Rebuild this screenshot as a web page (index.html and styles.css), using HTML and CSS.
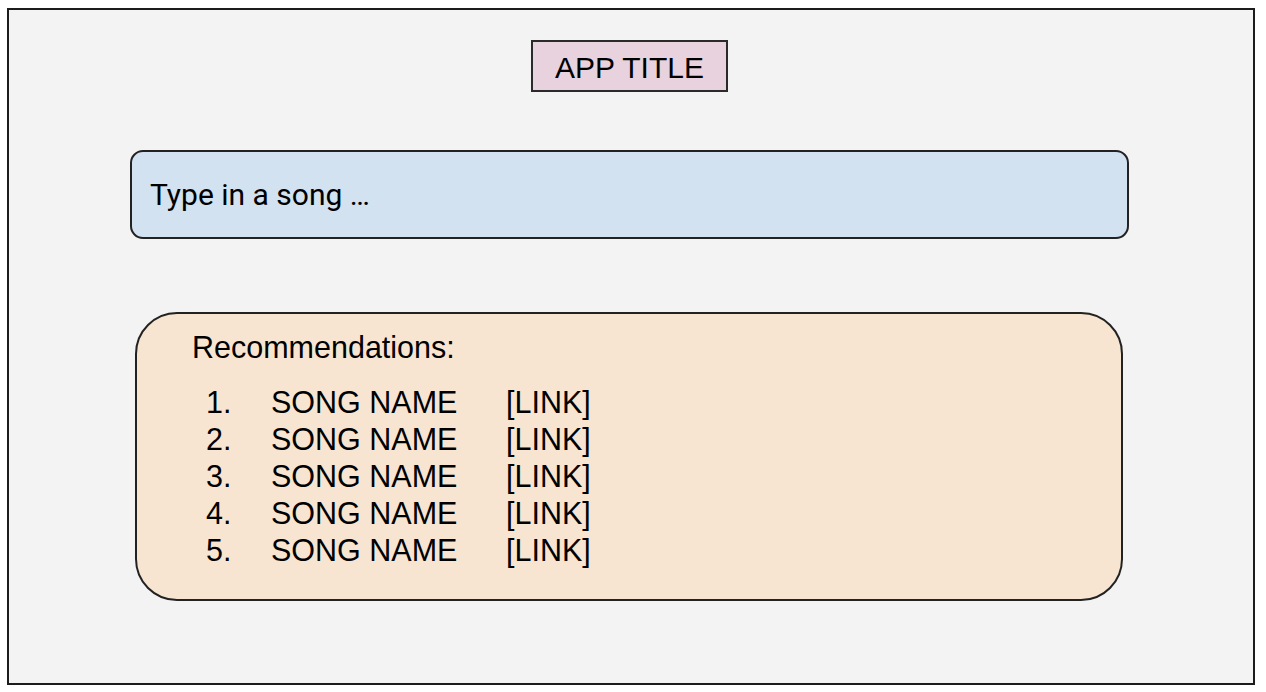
FILE: index.html
```html
<!DOCTYPE html>
<html lang="en">
<head>
<meta charset="utf-8">
<title>App</title>
<link rel="stylesheet" href="styles.css">
</head>
<body>
<div class="frame">
  <div class="title">APP TITLE</div>
  <div class="search">Type in a song …</div>
  <div class="recs">
    <div class="recs-head">Recommendations:</div>
    <ol class="rec-list">
      <li class="rec"><span class="num">1.</span><span class="name">SONG NAME</span><span class="link">[LINK]</span></li>
      <li class="rec"><span class="num">2.</span><span class="name">SONG NAME</span><span class="link">[LINK]</span></li>
      <li class="rec"><span class="num">3.</span><span class="name">SONG NAME</span><span class="link">[LINK]</span></li>
      <li class="rec"><span class="num">4.</span><span class="name">SONG NAME</span><span class="link">[LINK]</span></li>
      <li class="rec"><span class="num">5.</span><span class="name">SONG NAME</span><span class="link">[LINK]</span></li>
    </ol>
  </div>
</div>
</body>
</html>
```
FILE: styles.css
```css
html, body {
  margin: 0;
  padding: 0;
  background: #ffffff;
}
body {
  font-family: "Liberation Sans", Arial, sans-serif;
  color: #000;
}
.frame {
  margin: 8px 0 0 7px;
  width: 1248px;
  height: 677px;
  box-sizing: border-box;
  border: 2px solid #1c1c1c;
  background: #f3f3f3;
  padding-top: 30px;
}
.title {
  width: 197px;
  height: 52px;
  margin-left: 522px;
  box-sizing: border-box;
  border: 2px solid #2a2a2a;
  background: #e7d2dd;
  font-size: 30px;
  line-height: 51px;
  text-align: center;
}
.search {
  margin: 58px 0 0 121px;
  width: 999px;
  height: 89px;
  box-sizing: border-box;
  border: 2px solid #222;
  border-radius: 13px;
  background: #d2e2f1;
  padding-left: 18px;
  display: flex;
  align-items: center;
  font-family: Roboto, "Liberation Sans", sans-serif;
  font-size: 30px;
}
.recs {
  margin: 73px 0 0 126px;
  width: 988px;
  height: 289px;
  box-sizing: border-box;
  border: 2px solid #222;
  border-radius: 42px;
  background: #f7e5d1;
  padding: 15px 0 0 55px;
  font-size: 30.5px;
  line-height: 37px;
}
.rec-list {
  list-style: none;
  margin: 18px 0 0 14px;
  padding: 0;
}
.rec {
  display: grid;
  grid-template-columns: 65px 235px auto;
}
```
